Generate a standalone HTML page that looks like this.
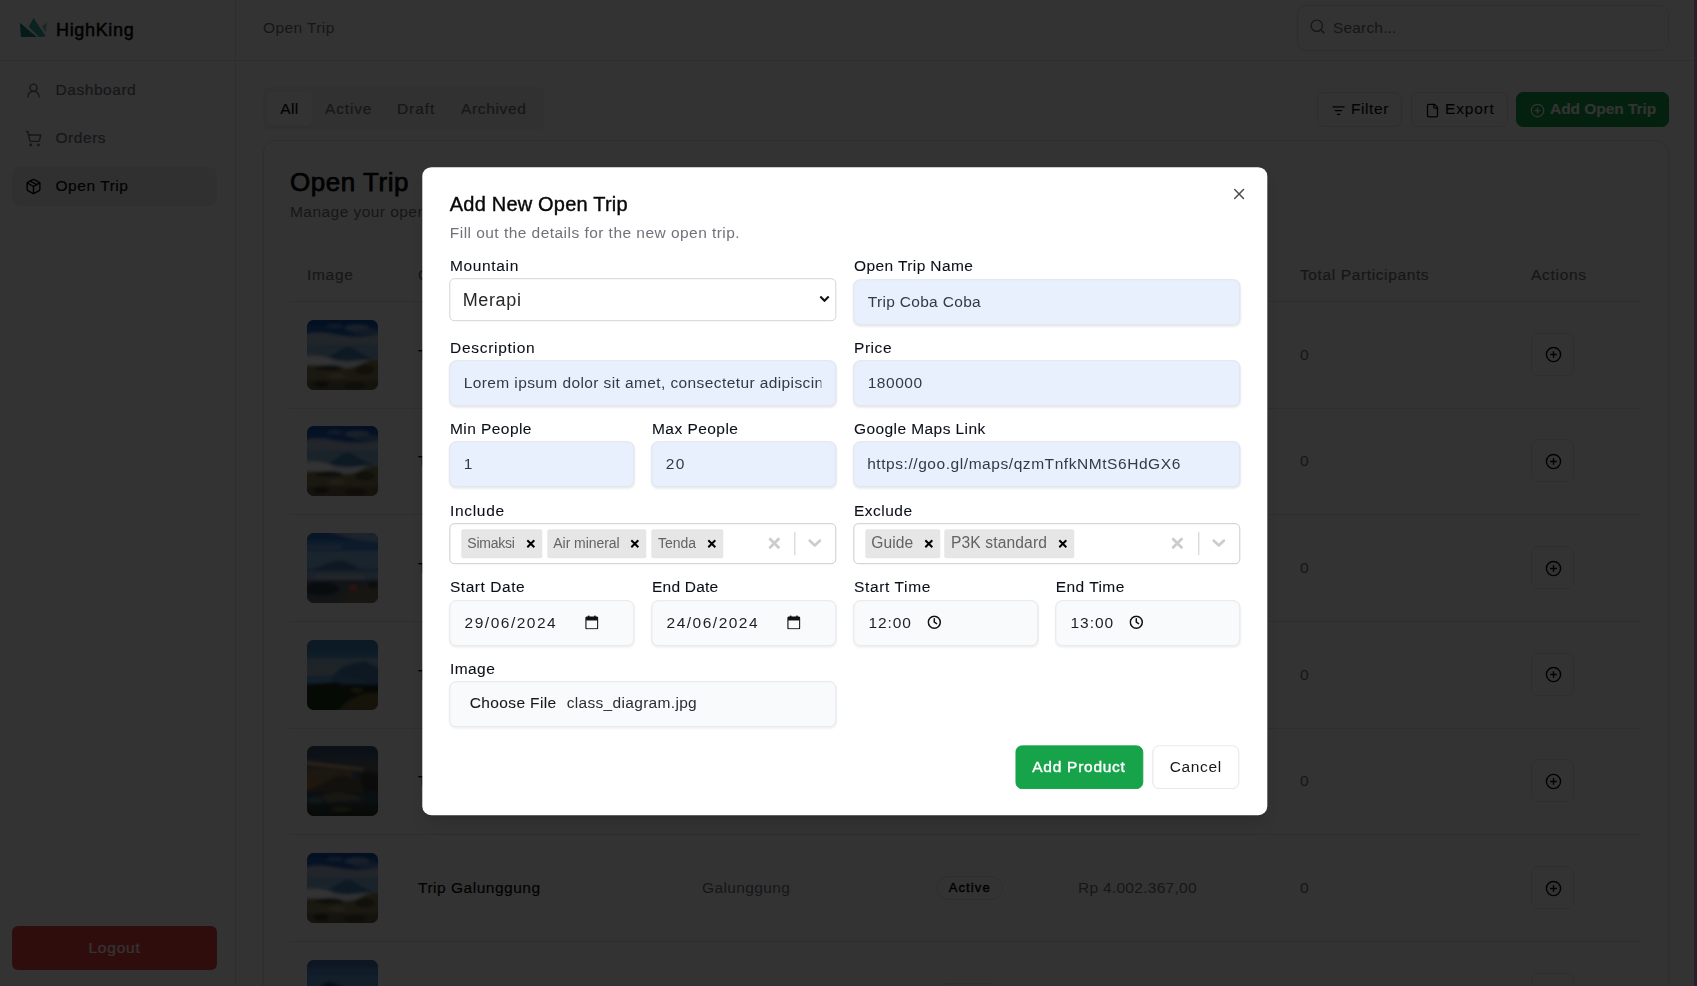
<!DOCTYPE html>
<html lang="en">
<head>
<meta charset="utf-8">
<title>HighKing - Open Trip</title>
<style>
*{box-sizing:border-box;margin:0;padding:0}
html,body{width:1697px;height:986px;overflow:hidden;background:#fff}
body{font-family:"Liberation Sans",sans-serif;color:#09090b;position:relative;font-size:15.5px}
.abs{position:absolute}
svg{display:block}
/* ---------- page ---------- */
#page{position:absolute;left:0;top:0;width:1694px;height:986px;background:#fff;overflow:hidden}
#strip{position:absolute;left:1694px;top:0;width:3px;height:986px;background:#2c1e31;z-index:50}
#sidebar{position:absolute;left:0;top:0;width:236px;height:986px;border-right:1px solid #e4e4e7;background:#fdfdfd}
#brand{position:absolute;left:0;top:0;width:235px;height:61px;border-bottom:1px solid #e4e4e7}
#brand .name{position:absolute;left:56px;top:18px;font-size:18px;font-weight:400;-webkit-text-stroke:.5px #09090b;letter-spacing:.2px;line-height:24px;color:#09090b}
.nav{position:absolute;left:12px;width:205px;height:39px;border-radius:8px;color:#71717a;font-size:15.5px;letter-spacing:.55px;line-height:37px;-webkit-text-stroke:.2px currentColor}
.nav span{position:absolute;left:43.5px;top:0}
.nav svg{position:absolute;left:13px;top:11px}
.nav.on{background:#f1f1f3;color:#09090b}
#logout{position:absolute;left:12px;top:926px;width:205px;height:44px;border-radius:6px;background:#ef4444;color:#fff;font-size:15.5px;font-weight:400;-webkit-text-stroke:.2px #fff;letter-spacing:.5px;text-align:center;line-height:44px}
#topbar{position:absolute;left:236px;top:0;width:1458px;height:61px;border-bottom:1px solid #e4e4e7;background:#fdfdfd}
#main{position:absolute;left:236px;top:61px;width:1458px;height:925px;background:#fdfdfd}

/* ---------- topbar ---------- */
#crumb{position:absolute;left:27px;top:17px;font-size:15.5px;line-height:21px;color:#71717a;letter-spacing:.45px}
#search{position:absolute;left:1061px;top:5px;width:372px;height:46px;border:1px solid #e4e4e7;border-radius:9px;background:#fff}
#search span{position:absolute;left:35px;top:11px;font-size:15.5px;line-height:21px;color:#71717a;letter-spacing:.5px}
#search svg{position:absolute;left:10.5px;top:12.3px}
/* ---------- main ---------- */
#tabs{position:absolute;left:27px;top:26px;width:281px;height:43px;border-radius:7px;background:#f3f3f5}
#tabs div{-webkit-text-stroke:.2px currentColor;position:absolute;top:5px;height:34px;line-height:33px;font-size:15.5px;color:#71717a;letter-spacing:.35px;white-space:nowrap}
#tabs .on{left:4px;width:45px;background:#fff;border-radius:5px;color:#09090b;box-shadow:0 1px 2px rgba(0,0,0,.06)}
.btn{-webkit-text-stroke:.1px currentColor;position:absolute;top:31px;height:35px;border:1px solid #e4e4e7;border-radius:7px;background:#fff;font-size:15.5px;line-height:32px;color:#09090b;letter-spacing:.4px;white-space:nowrap}
.btn span{position:absolute;top:0}
.btn svg{position:absolute}
.btn.green{background:#16a34a;border-color:#16a34a;color:#fff;font-weight:700;letter-spacing:.1px}
#card{position:absolute;left:27px;top:79px;width:1406px;height:901px;border:1px solid #e4e4e7;border-radius:13px;background:#fff;box-shadow:0 1px 2px rgba(0,0,0,.05)}
#card h2{position:absolute;left:26px;top:22px;font-size:26px;line-height:38px;font-weight:400;-webkit-text-stroke:.75px #09090b;letter-spacing:-.2px;color:#09090b;white-space:nowrap}
#card .sub{position:absolute;left:26px;top:59.8px;font-size:15.5px;line-height:21px;color:#71717a;letter-spacing:.45px;white-space:nowrap}
#thead{position:absolute;left:26px;top:109px;width:1351px;height:52px;border-bottom:1px solid #e4e4e7}
#thead span{-webkit-text-stroke:.2px currentColor;position:absolute;top:14px;font-size:15.5px;line-height:21px;color:#71717a;letter-spacing:.35px;white-space:nowrap}
.row{position:absolute;left:26px;width:1351px;height:106.67px;border-bottom:1px solid #e4e4e7}
.row .th{position:absolute;left:17px;top:17.5px;width:71px;height:70px;border-radius:7px;overflow:hidden}
.row span{position:absolute;top:41.5px;font-size:15.5px;line-height:21px;white-space:nowrap;letter-spacing:.35px}
.row .nm{left:128px;color:#09090b;-webkit-text-stroke:.2px currentColor}
.row .mt{left:412px;color:#71717a}
.row .pr{left:788px;color:#71717a}
.row .tp{left:1010px;color:#71717a}
.row .bd{left:647px;top:41px;width:65.5px;height:24px;border:1px solid #e4e4e7;border-radius:12px;font-size:13px;font-weight:400;-webkit-text-stroke:.45px #09090b;line-height:22px;text-align:center;color:#09090b;letter-spacing:.1px}
.row .ac{position:absolute;left:1241px;top:30.8px;width:43px;height:43px;border:1px solid #e4e4e7;border-radius:7px;background:#fff}
.row .ac svg{position:absolute;left:12.5px;top:12.5px}
/* ---------- overlay + modal ---------- */
#overlay{position:absolute;left:0;top:0;width:1694px;height:986px;background:rgba(0,0,0,.8);z-index:10}

#ml{position:absolute;left:0;top:0;width:1694px;height:986px;z-index:20;transform:translate(.3px,.2px);will-change:transform}
#ml .t{position:absolute;white-space:nowrap}
#mtitle{left:449.5px;top:190px;font-size:20px;line-height:28px;font-weight:400;letter-spacing:.2px;color:#09090b;-webkit-text-stroke:.4px #09090b}
#msub{left:449.5px;top:222px;font-size:15.5px;line-height:21px;color:#71717a;letter-spacing:.62px}
.lb{font-size:15.5px;line-height:20px;color:#0b0f19;letter-spacing:.55px;font-weight:400;-webkit-text-stroke:.08px #0b0f19}
.inp{position:absolute;height:46px;border-radius:7px;border:1px solid #dfe4ee;background:#e8f0fe;box-shadow:0 1px 2px rgba(0,0,0,.08)}
.inp.g{background:#f9fafb;border-color:#e5e7eb;box-shadow:0 1px 2px rgba(0,0,0,.05)}
.inp span{position:absolute;left:13.4px;top:11px;font-size:15.5px;line-height:21px;color:#333a47;letter-spacing:.7px;white-space:nowrap}
.inp.g span{color:#1c1f26}
.inp svg{position:absolute}
#msel{position:absolute;left:449px;top:278px;width:387px;height:43px;border:1px solid #d1d5db;border-radius:5px;background:#fff}
#msel span{position:absolute;left:12.4px;top:9px;font-size:18px;line-height:24px;color:#27272a;letter-spacing:.35px}
.rs{position:absolute;top:523px;width:387px;height:41px;border:1px solid #ccc;border-radius:5px;background:#fff}
.chip{position:absolute;top:5px;height:29px;border-radius:2px;background:#e6e6e6}
.chip span{position:absolute;top:0;line-height:29px;color:#636363;white-space:nowrap}
.chip svg{position:absolute;top:9.6px;margin-left:-.5px}
.rs .sep{position:absolute;top:8px;width:1.4px;height:23.4px;background:#ccc}
.rs svg.c{position:absolute}
.mbtn{position:absolute;top:745px;height:44px;border-radius:7px;font-size:15.5px;line-height:42px;text-align:left;white-space:nowrap}
#modal{position:absolute;left:422.3px;top:167.4px;width:844.6px;height:648px;background:#fff;border-radius:9px;box-shadow:0 10px 15px -3px rgba(0,0,0,.1),0 4px 6px -4px rgba(0,0,0,.1)}
</style>
</head>
<body>
<div id="page">
  <div id="sidebar">
    <div id="brand">
      <svg class="abs" style="left:19px;top:17px" width="29" height="21" viewBox="0 0 29 21"><polygon points="0.9,5.8 2,19.9 17.8,19.9" fill="#14857a"/><polygon points="14.5,0.9 26.9,19.5 19.9,19.9 9.8,9.8" fill="#3fa99a"/><polygon points="27.7,5.8 23,9.3 26.9,15.7" fill="#7fc4ba"/></svg>
      <div class="name" style="letter-spacing:0.66px">HighKing</div>
    </div>
    <div class="nav" style="top:71px"><svg width="17" height="17" viewBox="0 0 24 24" fill="none" stroke="currentColor" stroke-width="2" stroke-linecap="round" stroke-linejoin="round" ><circle cx="12" cy="8" r="5"/><path d="M20 21a8 8 0 0 0-16 0"/></svg><span>Dashboard</span></div>
    <div class="nav" style="top:119px"><svg width="17" height="17" viewBox="0 0 24 24" fill="none" stroke="currentColor" stroke-width="2" stroke-linecap="round" stroke-linejoin="round" ><circle cx="8" cy="21" r="1"/><circle cx="19" cy="21" r="1"/><path d="M2.05 2.05h2l2.66 12.42a2 2 0 0 0 2 1.58h9.78a2 2 0 0 0 1.95-1.57l1.65-7.43H5.12"/></svg><span>Orders</span></div>
    <div class="nav on" style="top:167px"><svg width="17" height="17" viewBox="0 0 24 24" fill="none" stroke="currentColor" stroke-width="2" stroke-linecap="round" stroke-linejoin="round" ><path d="m7.5 4.27 9 5.15"/><path d="M21 8a2 2 0 0 0-1-1.73l-7-4a2 2 0 0 0-2 0l-7 4A2 2 0 0 0 3 8v8a2 2 0 0 0 1 1.73l7 4a2 2 0 0 0 2 0l7-4A2 2 0 0 0 21 16Z"/><path d="m3.3 7 8.7 5 8.7-5"/><path d="M12 22V12"/></svg><span>Open Trip</span></div>
    <div id="logout" style="letter-spacing:0.78px">Logout</div>
  </div>
  <div id="topbar">
    <div id="crumb" style="letter-spacing:0.41px">Open Trip</div>
    <div id="search"><svg width="17" height="17" viewBox="0 0 24 24" fill="none" stroke="currentColor" stroke-width="2" stroke-linecap="round" stroke-linejoin="round" style="color:#71717a"><circle cx="11" cy="11" r="8"/><path d="m21 21-4.3-4.3"/></svg><span style="letter-spacing:0.17px">Search...</span></div>
  </div>
  <div id="main">
    <div id="tabs"><div class="on" style="text-align:center;letter-spacing:0.38px">All</div><div style="left:62px;letter-spacing:0.84px">Active</div><div style="left:134px;letter-spacing:0.91px">Draft</div><div style="left:198px;letter-spacing:0.66px">Archived</div></div>
    <div class="btn" style="left:1081px;width:85px"><svg width="15" height="15" viewBox="0 0 24 24" fill="none" stroke="currentColor" stroke-width="2" stroke-linecap="round" stroke-linejoin="round" style="left:13.2px;top:9.5px"><path d="M3 6h18"/><path d="M7 12h10"/><path d="M10 18h4"/></svg><span style="left:33px;letter-spacing:0.58px">Filter</span></div>
    <div class="btn" style="left:1175px;width:97px"><svg width="15" height="15" viewBox="0 0 24 24" fill="none" stroke="currentColor" stroke-width="2" stroke-linecap="round" stroke-linejoin="round" style="left:13.2px;top:9.5px"><path d="M15 2H6a2 2 0 0 0-2 2v16a2 2 0 0 0 2 2h12a2 2 0 0 0 2-2V7Z"/><path d="M14 2v4a2 2 0 0 0 2 2h4"/></svg><span style="left:33px;letter-spacing:0.82px">Export</span></div>
    <div class="btn green" style="left:1280px;width:153px"><svg width="15" height="15" viewBox="0 0 24 24" fill="none" stroke="currentColor" stroke-width="2" stroke-linecap="round" stroke-linejoin="round" style="left:13.2px;top:9.5px"><circle cx="12" cy="12" r="10"/><path d="M8 12h8"/><path d="M12 8v8"/></svg><span style="left:33px;letter-spacing:-0.05px">Add Open Trip</span></div>
    <div id="card">
      <h2 style="letter-spacing:0.54px">Open Trip</h2>
      <div class="sub">Manage your open trips and view their sales performance.</div>
      <div id="thead"><span style="left:17px;letter-spacing:0.69px">Image</span><span style="left:128px">Open Trip Name</span><span style="left:412px">Mountain</span><span style="left:647px">Status</span><span style="left:788px">Price</span><span style="left:1010px;letter-spacing:0.62px">Total Participants</span><span style="left:1241px;letter-spacing:0.71px">Actions</span></div>
    <div class="row" style="top:161.00px"><div class="th"><svg width="71" height="70" viewBox="0 0 71 70"><defs><filter id="tb0" x="-10%" y="-10%" width="120%" height="120%"><feGaussianBlur stdDeviation="1.7"/></filter></defs><rect width="71" height="70" fill="#556"/><g filter="url(#tb0)"><rect x="-5" y="-5" width="81" height="28" fill="#1e5fb8"/>
<rect x="-5" y="-5" width="81" height="10" fill="#0f4fa8"/>
<ellipse cx="50" cy="8" rx="12" ry="3" fill="#9fb8d8" opacity=".8"/><ellipse cx="28" cy="6" rx="8" ry="2" fill="#7f9fcc" opacity=".6"/>
<path d="M-5 15 Q10 11 24 14 T50 17 T76 13 V30 H-5Z" fill="#a9bdd4"/><ellipse cx="60" cy="12" rx="14" ry="3" fill="#5a86c0"/>
<rect x="-5" y="24" width="81" height="18" fill="#86b0d0"/>
<polygon points="20,38 34,29 40,26 46,28 56,34 66,39 66,44 20,44" fill="#3f7fae"/>
<path d="M-5 36 Q10 34 22 38 T44 41 T76 39 V48 H-5Z" fill="#e6eefa"/>
<ellipse cx="12" cy="41" rx="14" ry="4" fill="#ffffff"/>
<path d="M-5 46 Q12 44 28 47 T54 44 T76 40 V75 H-5Z" fill="#847c54"/>
<ellipse cx="22" cy="48" rx="14" ry="3" fill="#4a4a36"/><ellipse cx="58" cy="50" rx="10" ry="5" fill="#54503a"/>
<ellipse cx="30" cy="56" rx="8" ry="2" fill="#a8a078"/>
<rect x="-5" y="60" width="81" height="15" fill="#6a6244"/><ellipse cx="14" cy="64" rx="8" ry="4" fill="#3e3a2a"/><ellipse cx="48" cy="66" rx="12" ry="4" fill="#4a4630"/></g></svg></div><span class="nm">Trip Merapi</span><span class="mt">Merapi</span><span class="bd">Active</span><span class="pr">Rp 180.000,00</span><span class="tp">0</span><div class="ac"><svg width="17" height="17" viewBox="0 0 24 24" fill="none" stroke="currentColor" stroke-width="2" stroke-linecap="round" stroke-linejoin="round" ><circle cx="12" cy="12" r="10"/><path d="M8 12h8"/><path d="M12 8v8"/></svg></div></div>
    <div class="row" style="top:267.67px"><div class="th"><svg width="71" height="70" viewBox="0 0 71 70"><defs><filter id="tb1" x="-10%" y="-10%" width="120%" height="120%"><feGaussianBlur stdDeviation="1.7"/></filter></defs><rect width="71" height="70" fill="#556"/><g filter="url(#tb1)"><rect x="-5" y="-5" width="81" height="28" fill="#1e5fb8"/>
<rect x="-5" y="-5" width="81" height="10" fill="#0f4fa8"/>
<ellipse cx="50" cy="8" rx="12" ry="3" fill="#9fb8d8" opacity=".8"/><ellipse cx="28" cy="6" rx="8" ry="2" fill="#7f9fcc" opacity=".6"/>
<path d="M-5 15 Q10 11 24 14 T50 17 T76 13 V30 H-5Z" fill="#a9bdd4"/><ellipse cx="60" cy="12" rx="14" ry="3" fill="#5a86c0"/>
<rect x="-5" y="24" width="81" height="18" fill="#86b0d0"/>
<polygon points="20,38 34,29 40,26 46,28 56,34 66,39 66,44 20,44" fill="#3f7fae"/>
<path d="M-5 36 Q10 34 22 38 T44 41 T76 39 V48 H-5Z" fill="#e6eefa"/>
<ellipse cx="12" cy="41" rx="14" ry="4" fill="#ffffff"/>
<path d="M-5 46 Q12 44 28 47 T54 44 T76 40 V75 H-5Z" fill="#847c54"/>
<ellipse cx="22" cy="48" rx="14" ry="3" fill="#4a4a36"/><ellipse cx="58" cy="50" rx="10" ry="5" fill="#54503a"/>
<ellipse cx="30" cy="56" rx="8" ry="2" fill="#a8a078"/>
<rect x="-5" y="60" width="81" height="15" fill="#6a6244"/><ellipse cx="14" cy="64" rx="8" ry="4" fill="#3e3a2a"/><ellipse cx="48" cy="66" rx="12" ry="4" fill="#4a4630"/></g></svg></div><span class="nm">Trip Merbabu</span><span class="mt">Merbabu</span><span class="bd">Active</span><span class="pr">Rp 250.000,00</span><span class="tp">0</span><div class="ac"><svg width="17" height="17" viewBox="0 0 24 24" fill="none" stroke="currentColor" stroke-width="2" stroke-linecap="round" stroke-linejoin="round" ><circle cx="12" cy="12" r="10"/><path d="M8 12h8"/><path d="M12 8v8"/></svg></div></div>
    <div class="row" style="top:374.34px"><div class="th"><svg width="71" height="70" viewBox="0 0 71 70"><defs><filter id="tb2" x="-10%" y="-10%" width="120%" height="120%"><feGaussianBlur stdDeviation="1.7"/></filter></defs><rect width="71" height="70" fill="#556"/><g filter="url(#tb2)"><rect x="-5" y="-5" width="81" height="50" fill="#3e84d2"/>
<rect x="-5" y="-5" width="81" height="12" fill="#2a6cc4"/>
<polygon points="20,-2 76,-2 76,10 46,6" fill="#a8c0e0" opacity=".8"/>
<rect x="-5" y="12" width="40" height="4" fill="#9cc0e6" opacity=".6"/>
<rect x="-5" y="18" width="81" height="18" fill="#7fb2e0"/>
<polygon points="2,38 18,31 28,28 34,27 40,29 52,35 66,40 66,46 2,46" fill="#4a78b0"/>
<rect x="-5" y="38" width="81" height="10" fill="#86a8cc"/>
<rect x="8" y="42" width="50" height="4" fill="#b0c4dc"/>
<rect x="-5" y="47" width="81" height="28" fill="#5a646e"/>
<ellipse cx="14" cy="56" rx="18" ry="7" fill="#2e3e4e"/>
<polygon points="30,70 44,56 76,54 76,75 30,75" fill="#7a6e62"/>
<ellipse cx="46" cy="54" rx="4" ry="2" fill="#ff5a3c"/><ellipse cx="66" cy="52" rx="5" ry="4" fill="#3a4a3a"/></g></svg></div><span class="nm">Trip Rinjani</span><span class="mt">Rinjani</span><span class="bd">Active</span><span class="pr">Rp 1.200.000,00</span><span class="tp">0</span><div class="ac"><svg width="17" height="17" viewBox="0 0 24 24" fill="none" stroke="currentColor" stroke-width="2" stroke-linecap="round" stroke-linejoin="round" ><circle cx="12" cy="12" r="10"/><path d="M8 12h8"/><path d="M12 8v8"/></svg></div></div>
    <div class="row" style="top:481.01px"><div class="th"><svg width="71" height="70" viewBox="0 0 71 70"><defs><filter id="tb3" x="-10%" y="-10%" width="120%" height="120%"><feGaussianBlur stdDeviation="1.7"/></filter></defs><rect width="71" height="70" fill="#556"/><g filter="url(#tb3)"><rect x="-5" y="-5" width="81" height="50" fill="#4a90c8"/>
<rect x="-5" y="-5" width="81" height="16" fill="#3c82bc"/>
<rect x="-5" y="18" width="81" height="16" fill="#8cb0cc"/>
<rect x="-5" y="26" width="36" height="10" fill="#a0b4c4"/>
<polygon points="20,40 34,28 44,24 52,22 58,21 64,24 76,30 76,46 20,46" fill="#3f78ac"/>
<polygon points="6,44 22,36 30,34 44,38 60,42 76,44 76,50 6,50" fill="#4a86b8"/>
<rect x="-5" y="38" width="30" height="8" fill="#5aa0d8"/>
<rect x="-5" y="44" width="81" height="31" fill="#1c2c1c"/>
<polygon points="-5,44 30,42 52,50 76,56 76,75 -5,75" fill="#24301e"/>
<polygon points="28,75 40,62 56,54 76,52 76,75" fill="#6e6630"/>
<ellipse cx="50" cy="50" rx="6" ry="2" fill="#6a6a2a"/></g></svg></div><span class="nm">Trip Semeru</span><span class="mt">Semeru</span><span class="bd">Active</span><span class="pr">Rp 850.000,00</span><span class="tp">0</span><div class="ac"><svg width="17" height="17" viewBox="0 0 24 24" fill="none" stroke="currentColor" stroke-width="2" stroke-linecap="round" stroke-linejoin="round" ><circle cx="12" cy="12" r="10"/><path d="M8 12h8"/><path d="M12 8v8"/></svg></div></div>
    <div class="row" style="top:587.68px"><div class="th"><svg width="71" height="70" viewBox="0 0 71 70"><defs><filter id="tb4" x="-10%" y="-10%" width="120%" height="120%"><feGaussianBlur stdDeviation="1.7"/></filter></defs><rect width="71" height="70" fill="#556"/><g filter="url(#tb4)"><rect x="-5" y="-5" width="81" height="40" fill="#42607a"/>
<rect x="-5" y="-5" width="81" height="16" fill="#3a5674"/>
<rect x="-5" y="14" width="81" height="12" fill="#5a6068"/>
<rect x="-5" y="22" width="50" height="24" fill="#8a7252"/>
<rect x="-5" y="36" width="24" height="8" fill="#a87a3c"/>
<polygon points="-5,15 56,22 56,24.5 -5,18" fill="#d8b08a"/>
<polygon points="-2,44 14,38 26,32 34,29 40,30 46,33 54,27 60,25 66,26 76,32 76,52 -2,52" fill="#5c5444"/>
<polygon points="52,28 60,25 66,26 76,32 76,50 58,50" fill="#3a3a3a"/>
<rect x="-5" y="46" width="81" height="29" fill="#34505a"/>
<polygon points="14,50 30,46 50,50 56,54 20,56" fill="#7a7458"/>
<ellipse cx="8" cy="54" rx="8" ry="3" fill="#5a7880"/>
<rect x="-5" y="58" width="81" height="17" fill="#2c3c36"/><ellipse cx="34" cy="63" rx="10" ry="2" fill="#6a6a3a"/>
<rect x="-5" y="66" width="81" height="9" fill="#263028"/></g></svg></div><span class="nm">Trip Bromo</span><span class="mt">Bromo</span><span class="bd">Active</span><span class="pr">Rp 350.000,00</span><span class="tp">0</span><div class="ac"><svg width="17" height="17" viewBox="0 0 24 24" fill="none" stroke="currentColor" stroke-width="2" stroke-linecap="round" stroke-linejoin="round" ><circle cx="12" cy="12" r="10"/><path d="M8 12h8"/><path d="M12 8v8"/></svg></div></div>
    <div class="row" style="top:694.35px"><div class="th"><svg width="71" height="70" viewBox="0 0 71 70"><defs><filter id="tb5" x="-10%" y="-10%" width="120%" height="120%"><feGaussianBlur stdDeviation="1.7"/></filter></defs><rect width="71" height="70" fill="#556"/><g filter="url(#tb5)"><rect x="-5" y="-5" width="81" height="28" fill="#1e5fb8"/>
<rect x="-5" y="-5" width="81" height="10" fill="#0f4fa8"/>
<ellipse cx="50" cy="8" rx="12" ry="3" fill="#9fb8d8" opacity=".8"/><ellipse cx="28" cy="6" rx="8" ry="2" fill="#7f9fcc" opacity=".6"/>
<path d="M-5 15 Q10 11 24 14 T50 17 T76 13 V30 H-5Z" fill="#a9bdd4"/><ellipse cx="60" cy="12" rx="14" ry="3" fill="#5a86c0"/>
<rect x="-5" y="24" width="81" height="18" fill="#86b0d0"/>
<polygon points="20,38 34,29 40,26 46,28 56,34 66,39 66,44 20,44" fill="#3f7fae"/>
<path d="M-5 36 Q10 34 22 38 T44 41 T76 39 V48 H-5Z" fill="#e6eefa"/>
<ellipse cx="12" cy="41" rx="14" ry="4" fill="#ffffff"/>
<path d="M-5 46 Q12 44 28 47 T54 44 T76 40 V75 H-5Z" fill="#847c54"/>
<ellipse cx="22" cy="48" rx="14" ry="3" fill="#4a4a36"/><ellipse cx="58" cy="50" rx="10" ry="5" fill="#54503a"/>
<ellipse cx="30" cy="56" rx="8" ry="2" fill="#a8a078"/>
<rect x="-5" y="60" width="81" height="15" fill="#6a6244"/><ellipse cx="14" cy="64" rx="8" ry="4" fill="#3e3a2a"/><ellipse cx="48" cy="66" rx="12" ry="4" fill="#4a4630"/></g></svg></div><span class="nm" style="letter-spacing:0.51px">Trip Galunggung</span><span class="mt" style="letter-spacing:0.38px">Galunggung</span><span class="bd" style="letter-spacing:1.14px">Active</span><span class="pr" style="letter-spacing:0.28px">Rp 4.002.367,00</span><span class="tp">0</span><div class="ac"><svg width="17" height="17" viewBox="0 0 24 24" fill="none" stroke="currentColor" stroke-width="2" stroke-linecap="round" stroke-linejoin="round" ><circle cx="12" cy="12" r="10"/><path d="M8 12h8"/><path d="M12 8v8"/></svg></div></div>
    <div class="row" style="top:801.02px"><div class="th"><svg width="71" height="70" viewBox="0 0 71 70"><defs><filter id="tb6" x="-10%" y="-10%" width="120%" height="120%"><feGaussianBlur stdDeviation="1.7"/></filter></defs><rect width="71" height="70" fill="#556"/><g filter="url(#tb6)"><rect x="-5" y="-5" width="81" height="80" fill="#5a9ad6"/>
<rect x="-5" y="-5" width="81" height="14" fill="#3f70aa"/><rect x="-5" y="7" width="81" height="8" fill="#4c86c4"/>
<polygon points="6,32 14,25 22,21 30,24 42,30 60,36 60,44 6,44" fill="#1e4f94"/>
<rect x="-5" y="40" width="81" height="35" fill="#2a3c34"/></g></svg></div><span class="nm">Trip Slamet</span><span class="mt">Slamet</span><span class="bd">Active</span><span class="pr">Rp 300.000,00</span><span class="tp">0</span><div class="ac"><svg width="17" height="17" viewBox="0 0 24 24" fill="none" stroke="currentColor" stroke-width="2" stroke-linecap="round" stroke-linejoin="round" ><circle cx="12" cy="12" r="10"/><path d="M8 12h8"/><path d="M12 8v8"/></svg></div></div>
    </div>
  </div>
</div>
<div id="overlay"></div>
<div id="ml">
  <div id="modal"></div>
  <svg class="abs" style="left:1230.1px;top:185.2px;color:#4a4a4a" width="17.6" height="17.6" viewBox="0 0 24 24" fill="none" stroke="currentColor" stroke-width="2" stroke-linecap="round" stroke-linejoin="round"><path d="M18 6 6 18"/><path d="m6 6 12 12"/></svg>
  <div class="t" id="mtitle">Add New Open Trip</div>
  <div class="t" id="msub" style="letter-spacing:0.46px">Fill out the details for the new open trip.</div>

  <div class="t lb" style="left:449.7px;top:255.5px;letter-spacing:0.65px">Mountain</div>
  <div id="msel"><span style="letter-spacing:0.64px">Merapi</span><svg class="abs" style="left:369.4px;top:16px" width="10.4" height="7.4" viewBox="0 0 10.4 7.4" fill="none" stroke="#111" stroke-width="2.1" stroke-linecap="butt" stroke-linejoin="miter"><path d="M1 1.4 5.2 5.6 9.4 1.4"/></svg></div>
  <div class="t lb" style="left:853.7px;top:256.4px;letter-spacing:0.4px">Open Trip Name</div>
  <div class="inp" style="left:853px;top:279px;width:387px"><span style="letter-spacing:0.32px">Trip Coba Coba</span></div>

  <div class="t lb" style="left:449.7px;top:337.7px;letter-spacing:0.71px">Description</div>
  <div class="inp" style="left:449px;top:360px;width:387px"><span style="width:357.2px;overflow:hidden;letter-spacing:.4px">Lorem ipsum dolor sit amet, consectetur adipiscing elit</span></div>
  <div class="t lb" style="left:853.7px;top:337.7px;letter-spacing:0.56px">Price</div>
  <div class="inp" style="left:853px;top:360px;width:387px"><span style="letter-spacing:0.55px">180000</span></div>

  <div class="t lb" style="left:449.7px;top:418.5px;letter-spacing:0.44px">Min People</div>
  <div class="inp" style="left:449px;top:441px;width:185px"><span>1</span></div>
  <div class="t lb" style="left:651.7px;top:418.5px;letter-spacing:0.46px">Max People</div>
  <div class="inp" style="left:651px;top:441px;width:185px"><span style="letter-spacing:1.5px">20</span></div>
  <div class="t lb" style="left:853.7px;top:418.5px;letter-spacing:0.42px">Google Maps Link</div>
  <div class="inp" style="left:853px;top:441px;width:387px"><span style="left:12.9px;letter-spacing:0.56px">https://goo.gl/maps/qzmTnfkNMtS6HdGX6</span></div>

  <div class="t lb" style="left:449.7px;top:500.8px;letter-spacing:0.69px">Include</div>
  <div class="rs" style="left:449px">
    <div class="chip" style="left:11px;width:81px"><span style="left:6px;font-size:14px;letter-spacing:-0.24px">Simaksi</span><svg style="left:65px" width="9" height="9" viewBox="0 0 9 9" stroke="#000" stroke-width="2" fill="none"><path d="M1 1 8 8M8 1 1 8"/></svg></div>
    <div class="chip" style="left:97px;width:99px"><span style="left:6px;font-size:14px;letter-spacing:-0.06px">Air mineral</span><svg style="left:83px" width="9" height="9" viewBox="0 0 9 9" stroke="#000" stroke-width="2" fill="none"><path d="M1 1 8 8M8 1 1 8"/></svg></div>
    <div class="chip" style="left:201px;width:72px"><span style="left:6.8px;font-size:14px;letter-spacing:-0.07px">Tenda</span><svg style="left:56px" width="9" height="9" viewBox="0 0 9 9" stroke="#000" stroke-width="2" fill="none"><path d="M1 1 8 8M8 1 1 8"/></svg></div>
    <svg class="c" style="left:318px;top:13px" width="12" height="12" viewBox="0 0 12 12" stroke="#ccc" stroke-width="2.7" fill="none"><path d="M1 1 11 11M11 1 1 11"/></svg><div class="sep" style="left:344px"></div><svg class="c" style="left:358px;top:15.2px" width="13" height="8" viewBox="0 0 13 8" stroke="#ccc" stroke-width="2.6" fill="none" stroke-linejoin="round" stroke-linecap="round"><path d="M1.3 1.3 6.5 6.3 11.7 1.3"/></svg>
  </div>
  <div class="t lb" style="left:853.7px;top:500.8px;letter-spacing:0.48px">Exclude</div>
  <div class="rs" style="left:853px">
    <div class="chip" style="left:11px;width:75px"><span style="left:6px;font-size:15.6px;top:-1.5px;letter-spacing:0.05px">Guide</span><svg style="left:59px" width="9" height="9" viewBox="0 0 9 9" stroke="#000" stroke-width="2" fill="none"><path d="M1 1 8 8M8 1 1 8"/></svg></div>
    <div class="chip" style="left:90px;width:130px"><span style="left:6.7px;font-size:15.6px;top:-1.5px;letter-spacing:0.13px">P3K standard</span><svg style="left:114px" width="9" height="9" viewBox="0 0 9 9" stroke="#000" stroke-width="2" fill="none"><path d="M1 1 8 8M8 1 1 8"/></svg></div>
    <svg class="c" style="left:317px;top:13px" width="12" height="12" viewBox="0 0 12 12" stroke="#ccc" stroke-width="2.7" fill="none"><path d="M1 1 11 11M11 1 1 11"/></svg><div class="sep" style="left:344px"></div><svg class="c" style="left:358px;top:15.2px" width="13" height="8" viewBox="0 0 13 8" stroke="#ccc" stroke-width="2.6" fill="none" stroke-linejoin="round" stroke-linecap="round"><path d="M1.3 1.3 6.5 6.3 11.7 1.3"/></svg>
  </div>

  <div class="t lb" style="left:449.7px;top:576.8px;letter-spacing:0.54px">Start Date</div>
  <div class="inp g" style="left:449px;top:600px;width:185px"><span style="left:14.3px;letter-spacing:1.5px">29/06/2024</span><svg style="left:135px;top:13.8px" width="13" height="14.2" viewBox="0 0 13 14" preserveAspectRatio="none"><path d="M1.5 2h10a1 1 0 0 1 1 1v9.5a1 1 0 0 1-1 1h-10a1 1 0 0 1-1-1V3a1 1 0 0 1 1-1Z" fill="none" stroke="#111" stroke-width="1.4"/><rect x="0.8" y="2" width="11.4" height="3.2" fill="#111"/><rect x="2.6" y="0.3" width="1.6" height="2.4" fill="#111"/><rect x="8.8" y="0.3" width="1.6" height="2.4" fill="#111"/></svg></div>
  <div class="t lb" style="left:651.7px;top:576.8px;letter-spacing:0.23px">End Date</div>
  <div class="inp g" style="left:651px;top:600px;width:185px"><span style="left:14.3px;letter-spacing:1.49px">24/06/2024</span><svg style="left:135px;top:13.8px" width="13" height="14.2" viewBox="0 0 13 14" preserveAspectRatio="none"><path d="M1.5 2h10a1 1 0 0 1 1 1v9.5a1 1 0 0 1-1 1h-10a1 1 0 0 1-1-1V3a1 1 0 0 1 1-1Z" fill="none" stroke="#111" stroke-width="1.4"/><rect x="0.8" y="2" width="11.4" height="3.2" fill="#111"/><rect x="2.6" y="0.3" width="1.6" height="2.4" fill="#111"/><rect x="8.8" y="0.3" width="1.6" height="2.4" fill="#111"/></svg></div>
  <div class="t lb" style="left:853.7px;top:576.8px;letter-spacing:0.64px">Start Time</div>
  <div class="inp g" style="left:853px;top:600px;width:185px"><span style="left:14.2px;letter-spacing:0.91px">12:00</span><svg style="left:73px;top:14.3px" width="14" height="14" viewBox="0 0 14 14" fill="none" stroke="#111" stroke-width="1.5" stroke-linecap="round" stroke-linejoin="round"><circle cx="7" cy="7" r="6"/><path d="M7 3.6V7l2.3 1.4"/></svg></div>
  <div class="t lb" style="left:1055.5px;top:576.8px;letter-spacing:0.43px">End Time</div>
  <div class="inp g" style="left:1055px;top:600px;width:185px"><span style="left:14.2px;letter-spacing:0.95px">13:00</span><svg style="left:73px;top:14.3px" width="14" height="14" viewBox="0 0 14 14" fill="none" stroke="#111" stroke-width="1.5" stroke-linecap="round" stroke-linejoin="round"><circle cx="7" cy="7" r="6"/><path d="M7 3.6V7l2.3 1.4"/></svg></div>

  <div class="t lb" style="left:449.7px;top:658.9px;letter-spacing:0.43px">Image</div>
  <div class="inp g" style="left:449px;top:681px;width:387px"><span style="left:19.5px;top:10.3px;font-size:15.5px;color:#18181b;-webkit-text-stroke:.08px #18181b;letter-spacing:0.37px">Choose File</span><span style="left:116.4px;top:10.3px;color:#2a2d33;letter-spacing:0.32px">class_diagram.jpg</span></div>

  <div class="mbtn" style="left:1015.4px;width:127.3px;background:#16a34a;border:1px solid #16a34a;color:#fff;font-weight:400;-webkit-text-stroke:.4px #fff;padding-left:15.6px;letter-spacing:0.73px">Add Product</div>
  <div class="mbtn" style="left:1151.6px;width:87.7px;background:#fff;border:1px solid #e4e4e7;color:#18181b;padding-left:16.8px;letter-spacing:0.64px">Cancel</div>
</div>
<div id="strip"></div>
</body>
</html>
